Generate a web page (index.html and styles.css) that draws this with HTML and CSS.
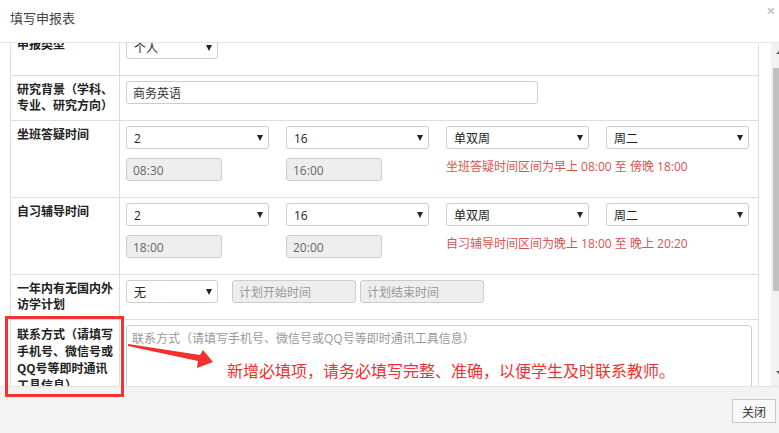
FILE: index.html
```html
<!DOCTYPE html>
<html lang="zh-CN">
<head>
    <meta charset="UTF-8">
    <title>填写申报表</title>
    <link rel="stylesheet" href="styles.css">
</head>
<body>
    <div class="dialog">
        <div class="dialog-head">
            <span class="dialog-title">填写申报表</span>
            <span class="dialog-close">×</span>
        </div>

        <div class="dialog-body">
            <div class="scroll" id="scrollArea">
                <table class="form-table">
                    <colgroup>
                        <col class="col-label">
                        <col>
                    </colgroup>
                    <tr>
                        <th>申报类型</th>
                        <td>
                            <div class="line">
                                <span class="select w-short"><select><option>个人</option></select></span>
                            </div>
                        </td>
                    </tr>
                    <tr>
                        <th>研究背景（学科、专业、研究方向）</th>
                        <td>
                            <div class="line">
                                <input type="text" class="input w-long" value="商务英语">
                            </div>
                        </td>
                    </tr>
                    <tr>
                        <th>坐班答疑时间</th>
                        <td>
                            <div class="time-grid">
                                <span class="select"><select><option>2</option></select></span>
                                <span class="select"><select><option>16</option></select></span>
                                <span class="select"><select><option>单双周</option></select></span>
                                <span class="select"><select><option>周二</option></select></span>
                                <input type="text" class="input w-time" value="08:30" disabled>
                                <input type="text" class="input w-time" value="16:00" disabled>
                                <span class="hint">坐班答疑时间区间为早上 08:00 至 傍晚 18:00</span>
                            </div>
                        </td>
                    </tr>
                    <tr>
                        <th>自习辅导时间</th>
                        <td>
                            <div class="time-grid">
                                <span class="select"><select><option>2</option></select></span>
                                <span class="select"><select><option>16</option></select></span>
                                <span class="select"><select><option>单双周</option></select></span>
                                <span class="select"><select><option>周二</option></select></span>
                                <input type="text" class="input w-time" value="18:00" disabled>
                                <input type="text" class="input w-time" value="20:00" disabled>
                                <span class="hint">自习辅导时间区间为晚上 18:00 至 晚上 20:20</span>
                            </div>
                        </td>
                    </tr>
                    <tr>
                        <th>一年内有无国内外访学计划</th>
                        <td>
                            <div class="line visit">
                                <span class="select w-short"><select><option>无</option></select></span>
                                <input type="text" class="input w-plan first-plan" placeholder="计划开始时间" disabled>
                                <input type="text" class="input w-plan" placeholder="计划结束时间" disabled>
                            </div>
                        </td>
                    </tr>
                    <tr>
                        <th class="label-tall">联系方式（请填写手机号、微信号或QQ号等即时通讯工具信息）</th>
                        <td>
                            <div class="line">
                                <textarea class="input contact" placeholder="联系方式（请填写手机号、微信号或QQ号等即时通讯工具信息）"></textarea>
                            </div>
                        </td>
                    </tr>
                </table>
            </div>
            <div class="scrollbar">
                <span class="sb-arrow sb-up"></span>
                <div class="sb-thumb"></div>
                <span class="sb-arrow sb-down"></span>
            </div>
        </div>

        <div class="dialog-foot">
            <button class="btn">关闭</button>
        </div>

        <!-- annotation drawn on top of the screenshot -->
        <div class="mark-box"></div>
        <svg class="mark-arrow" width="779" height="433" viewBox="0 0 779 433">
            <polygon points="128,344 200,355 203,350 213,362 197,368 198,361 128,346" fill="#f2302f"/>
        </svg>
        <div class="mark-text">新增必填项，请务必填写完整、准确，以便学生及时联系教师。</div>
    </div>

    <script>
        // keep the body scrolled a little, as in the real dialog
        document.getElementById('scrollArea').scrollTop = 23;
    </script>
</body>
</html>
```

FILE: styles.css
```css
* {
    margin: 0;
    padding: 0;
    box-sizing: border-box;
}

body {
    font-family: "Open Sans", "Noto Sans CJK SC", sans-serif;
    font-size: 12px;
    color: #333;
    background: #fff;
    overflow: hidden;
}

.dialog {
    position: relative;
    width: 779px;
    height: 433px;
    display: flex;
    flex-direction: column;
}

.dialog-head {
    height: 43px;
    border-bottom: 1px solid #e5e5e5;
    display: flex;
    justify-content: space-between;
    align-items: flex-start;
    padding: 9px 4px 0 10px;
}

.dialog-title {
    font-size: 13px;
    color: #444;
    line-height: 18px;
}

.dialog-close {
    font-size: 15px;
    font-weight: bold;
    color: #c4c4c4;
    line-height: 12px;
    margin-top: -5px;
}

.dialog-body {
    height: 343px;
    display: flex;
}

.scroll {
    flex: 1;
    overflow: hidden;
    padding: 10px 13px 20px 10px;
}

.scrollbar {
    width: 8px;
    background: #f1f1f1;
    display: flex;
    flex-direction: column;
    align-items: flex-end;
}

.sb-thumb {
    width: 6px;
    height: 223px;
    background: #c1c1c1;
    margin-top: 14px;
}

.sb-arrow {
    width: 0;
    height: 0;
    border-left: 3px solid transparent;
    border-right: 0 solid transparent;
}

.sb-up {
    margin-top: 8px;
    border-bottom: 3px solid #555;
}

.sb-down {
    margin-top: auto;
    margin-bottom: 12px;
    border-top: 3px solid #555;
}

.form-table {
    width: 749px;
    border-collapse: collapse;
    table-layout: fixed;
}

.col-label {
    width: 109px;
}

.form-table th,
.form-table td {
    border: 1px solid #ddd;
    padding: 5px 5px 7px 6px;
    vertical-align: top;
    text-align: left;
}

.form-table th {
    font-family: "Noto Sans CJK SC", sans-serif;
    font-size: 12px;
    font-weight: bold;
    line-height: 16px;
    color: #222;
}

.form-table th.label-tall {
    line-height: 17px;
}

.line {
    display: flex;
    margin-bottom: 9px;
}

.select {
    position: relative;
    display: block;
    height: 23px;
}

.select select {
    appearance: none;
    -webkit-appearance: none;
    width: 100%;
    height: 23px;
    border: 1px solid #ccc;
    border-radius: 3px;
    background: #fff;
    font-family: "Open Sans", "Noto Sans CJK SC", sans-serif;
    font-size: 12px;
    color: #222;
    padding: 2px 20px 0 7px;
}

.select::after {
    content: "";
    position: absolute;
    right: 6px;
    top: 9px;
    border-left: 3px solid transparent;
    border-right: 3px solid transparent;
    border-top: 6px solid #222;
}

.w-short {
    width: 92px;
}

.input {
    height: 23px;
    border: 1px solid #ccc;
    border-radius: 3px;
    background: #fff;
    font-family: "Open Sans", "Noto Sans CJK SC", sans-serif;
    font-size: 12px;
    color: #333;
    padding: 1px 6px 0;
}

.input:disabled {
    background: #eee;
    color: #666;
}

.input::placeholder {
    color: #999;
}

.w-long {
    width: 412px;
}

.time-grid {
    display: grid;
    grid-template-columns: repeat(4, 143px);
    column-gap: 17px;
    row-gap: 9px;
    margin-bottom: 9px;
}

.w-time {
    width: 96px;
}

.hint {
    grid-column: 3 / 5;
    color: #d9534f;
    font-size: 12px;
    line-height: 17px;
}

.w-plan {
    width: 124px;
}

.visit .first-plan {
    margin-left: 14px;
    margin-right: 4px;
}

.contact {
    width: 626px;
    height: 90px;
    padding: 5px 5px;
    resize: none;
    line-height: 16px;
}

.dialog-foot {
    flex: 1;
    background: #f3f3f3;
    border-top: 1px solid #e3e3e3;
    display: flex;
    justify-content: flex-end;
    align-items: flex-start;
    padding: 12px 3px 0 0;
}

.btn {
    width: 44px;
    height: 24px;
    border: 1px solid #c8c8c8;
    background: #f8f8f8;
    font-family: "Noto Sans CJK SC", sans-serif;
    font-size: 12px;
    color: #333;
}

.mark-box {
    position: absolute;
    left: 5px;
    top: 316px;
    width: 119px;
    height: 81px;
    border: 3px solid #ef3434;
}

.mark-arrow {
    position: absolute;
    left: 0;
    top: 0;
    pointer-events: none;
}

.mark-text {
    position: absolute;
    left: 227px;
    top: 360px;
    font-family: "Noto Sans CJK SC", sans-serif;
    font-size: 16px;
    line-height: 20px;
    color: #f2302f;
    white-space: nowrap;
}
```
